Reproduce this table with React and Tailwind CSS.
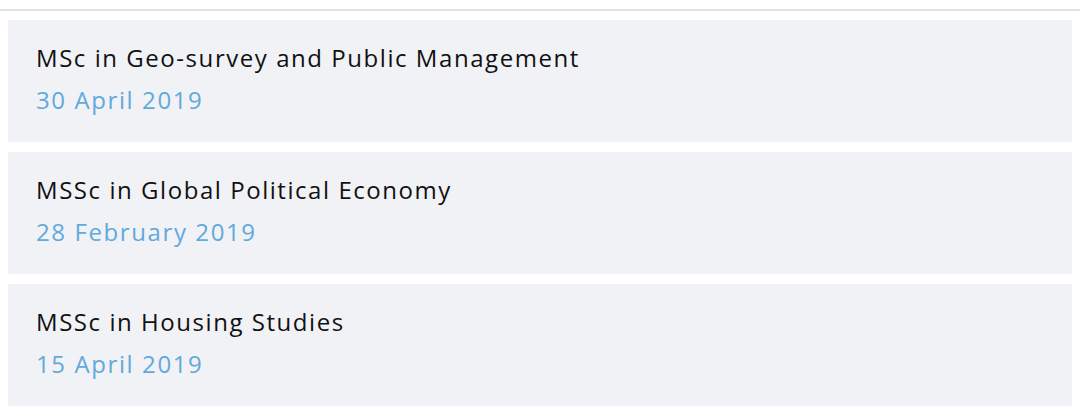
export default function App() {
  const items = [
    { t: "MSc in Geo-survey and Public Management", d: "30 April 2019" },
    { t: "MSSc in Global Political Economy", d: "28 February 2019" },
    { t: "MSSc in Housing Studies", d: "15 April 2019" },
  ];
  return (
    <div className="w-[1080px] h-[417px] bg-white overflow-hidden" style={{ fontFamily: "'Open Sans', sans-serif" }}>
      <div className="h-[9px]" />
      <div className="h-[2px] bg-[#e2e2e2]" />
      <div className="flex flex-col gap-[10px] pt-[9px] pl-[8px] pr-[8px]">
        {items.map((it, i) => (
          <div key={i} className="bg-[#f1f2f5] h-[122px] pl-[28px] pt-[22px]">
            <div className="text-[24px] leading-[32px] tracking-[1.55px] text-[#111111]">{it.t}</div>
            <div className="text-[24px] leading-[32px] tracking-[1.6px] mt-[10px] text-[#62a9dc]">{it.d}</div>
          </div>
        ))}
      </div>
    </div>
  );
}
